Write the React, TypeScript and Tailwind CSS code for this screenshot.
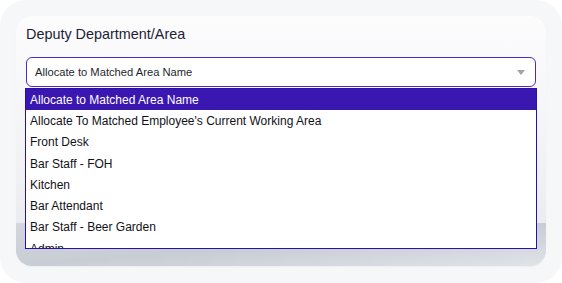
const options = [
  "Allocate to Matched Area Name",
  "Allocate To Matched Employee's Current Working Area",
  "Front Desk",
  "Bar Staff - FOH",
  "Kitchen",
  "Bar Attendant",
  "Bar Staff - Beer Garden",
  "Admin",
];

const font = { fontFamily: '"Liberation Sans", Arial, sans-serif' };

export default function App() {
  return (
    <div className="w-[562px] h-[283px] bg-white overflow-hidden" style={font}>
      <div className="w-[562px] h-[283px] rounded-[26px] bg-[#f6f7f9] p-4">
        <div className="relative w-[530px] h-[250px] rounded-2xl overflow-hidden flex flex-col bg-gradient-to-b from-[#fcfcfd] via-[#f3f4f6] to-[#e6e8ec] shadow-[0_1px_2px_rgba(0,0,0,0.04)]">
          <div className="px-[10px] pt-[10px] flex flex-col">
            <label className="text-[14.4px] leading-[17px] text-[#1d1d35]">
              Deputy Department/Area
            </label>
            <div className="mt-[14px] h-[30px] rounded-[6px] border border-[#4a2cc4] bg-white flex items-center justify-between pl-[8px] pr-[10px]">
              <span className="text-[11.2px] text-[#1f1f2e]">{options[0]}</span>
              <span className="w-0 h-0 border-l-[4px] border-r-[4px] border-t-[5px] border-l-transparent border-r-transparent border-t-[#a3a3ab]" />
            </div>
          </div>
          <div className="mt-auto h-[43px] bg-gradient-to-br from-[#d3d7dd] via-[#c8ccd3] to-[#e0e3e8]" />
          <div className="absolute left-[9px] top-[72px] w-[512px] h-[161px] border border-[#2b0fa6] bg-white overflow-hidden">
            {options.map((o, i) => (
              <div
                key={o}
                className={
                  i === 0
                    ? "h-[21.3px] flex items-center px-[4px] text-[12px] bg-[#3a17b0] text-white"
                    : "h-[21.3px] flex items-center px-[4px] text-[12px] text-[#111118]"
                }
              >
                {o}
              </div>
            ))}
          </div>
        </div>
      </div>
    </div>
  );
}
